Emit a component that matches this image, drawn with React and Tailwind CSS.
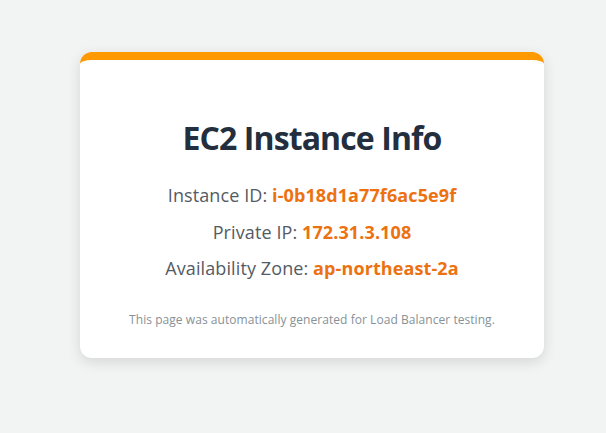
export default function App() {
  return (
    <div className="min-h-[433px] bg-[#f2f3f3] pt-[52px] font-['Open_Sans',_'Noto_Sans',_sans-serif]">
      <div className="ml-[80px] w-[464px] h-[306px] bg-white rounded-[12px] border-t-[8px] border-[#ff9900] shadow-[0_4px_14px_rgba(0,0,0,0.12)] flex flex-col items-center">
        <h1 className="mt-[58px] text-[32px] leading-[40px] font-bold text-[#232f3e] tracking-[-0.9px]">EC2 Instance Info</h1>
        <div className="mt-[25px] flex flex-col items-center gap-[12.5px] text-[18px] leading-[24px] text-[#545b64] tracking-[0.1px]">
          <p>Instance ID: <span className="font-bold text-[#ec7211]">i-0b18d1a77f6ac5e9f</span></p>
          <p>Private IP: <span className="font-bold text-[#ec7211]">172.31.3.108</span></p>
          <p>Availability Zone: <span className="font-bold text-[#ec7211]">ap-northeast-2a</span></p>
        </div>
        <p className="mt-[32px] text-[12px] leading-[16px] text-[#879196] tracking-[0.05px]">This page was automatically generated for Load Balancer testing.</p>
      </div>
    </div>
  );
}
